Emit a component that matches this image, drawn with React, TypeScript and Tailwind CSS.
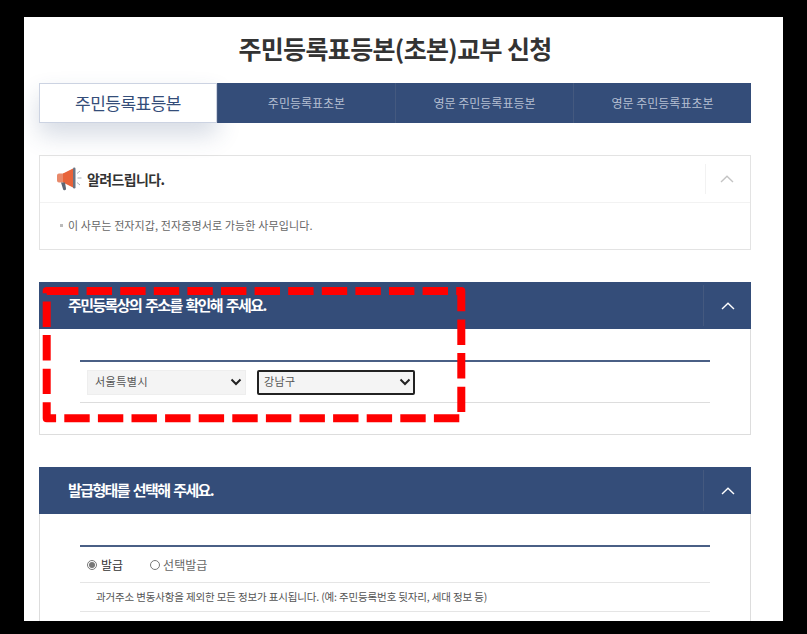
const tabs = ["주민등록표초본", "영문 주민등록표등본", "영문 주민등록표초본"];

function Chevron({ className }: { className: string }) {
  return (
    <svg width="14" height="8" viewBox="0 0 14 8" fill="none" className={className}>
      <path d="M1 7L7 1.2L13 7" stroke="currentColor" strokeWidth="1.4" />
    </svg>
  );
}

function SelectChevron() {
  return (
    <svg width="12" height="8" viewBox="0 0 12 8" fill="none">
      <path d="M1.5 1.5L6 6L10.5 1.5" stroke="#222" strokeWidth="2" />
    </svg>
  );
}

function Megaphone() {
  return (
    <svg width="26" height="24" viewBox="0 0 26 24" fill="none">
      <path d="M3 6.500h5v9H3a2 2 0 0 1-2-2v-5a2 2 0 0 1 2-2z" fill="#e8896a" />
      <path d="M7 6.500l10-5v19l-10-5z" fill="#e8633a" />
      <rect x="17" y="0.500" width="2.500" height="21" rx="1.200" fill="#6b7483" />
      <path d="M5 15.500h4l1 6a1.500 1.500 0 0 1-3 0.500z" fill="#5d6675" />
      <path d="M21.500 11h4M21 6.500l3-2.500M21 15.500l3 2.500" stroke="#aab0b8" strokeWidth="1" />
    </svg>
  );
}

function SectionHeader({ title }: { title: string }) {
  return (
    <div className="-mx-px flex h-[47px] items-center justify-between bg-[#344d79] pl-[29px]">
      <h3 className="text-[15px] font-bold tracking-[-1.6px] text-white [word-spacing:2px]">{title}</h3>
      <div className="flex h-[41px] w-[48px] items-center justify-center border-l border-[#44597f]">
        <Chevron className="text-white" />
      </div>
    </div>
  );
}

function Select({ label, focused }: { label: string; focused?: boolean }) {
  return (
    <div
      className={
        focused
          ? "flex h-[25px] w-[158px] items-center justify-between rounded-[2px] border-2 border-[#222] bg-[#f4f4f4] pl-[5px] pr-[2px] pb-[1px] text-[11px] tracking-[0.4px] text-[#555]"
          : "flex h-[25px] w-[159px] items-center justify-between border border-[#eeeeee] bg-[#f4f4f4] pl-[7px] pr-[3px] pb-[1px] text-[11px] tracking-[0.5px] text-[#555]"
      }
    >
      <span>{label}</span>
      <SelectChevron />
    </div>
  );
}

export default function App() {
  return (
    <div className="relative h-[634px] w-[807px] overflow-hidden bg-black pl-[24px] pt-[17px] font-['Noto_Sans_CJK_KR','Noto_Sans',sans-serif]">
      <div className="h-[605px] w-[759px] overflow-hidden bg-white pl-[15px] pr-[32px]">
        <h1 className="h-[66px] pt-[11px] text-center text-[25px] leading-[40px] font-bold tracking-[-0.65px] text-[#333]">
          주민등록표등본(초본)교부 신청
        </h1>

        <div className="flex h-[40px] w-[712px]">
          <div className="flex h-[40px] w-[178px] items-center justify-center border border-[#ccd3e2] bg-white text-[17px] tracking-[-0.5px] text-[#344d79] shadow-[0_12px_24px_rgba(52,77,121,0.2)]">
            주민등록표등본
          </div>
          {tabs.map((tab) => (
            <div
              key={tab}
              className="flex h-[40px] w-[178px] items-center justify-center border-l border-[#44597f] bg-[#344d79] text-[12px] text-[#b4bfd2]"
            >
              {tab}
            </div>
          ))}
        </div>

        <section className="mt-[32px] h-[95px] border border-[#e3e3e3]">
          <div className="flex h-[47px] items-center justify-between border-b border-[#f2f2f2] pl-[16px]">
            <div className="flex items-center gap-[5px]">
              <Megaphone />
              <h3 className="text-[14px] font-bold tracking-[-0.65px] text-[#333]">알려드립니다.</h3>
            </div>
            <div className="flex h-[30px] w-[45px] items-center justify-center border-l border-[#f2f2f2] pr-[3px]">
              <Chevron className="text-[#c4c4c4]" />
            </div>
          </div>
          <p className="flex h-[46px] items-center gap-[5px] pl-[20px] pb-[1px] text-[11px] tracking-[0.12px] text-[#666]">
            <span className="h-[3px] w-[3px] bg-[#bbb]" />이 사무는 전자지갑, 전자증명서로 가능한 사무입니다.
          </p>
        </section>

        <section className="mt-[32px] h-[153px] border-x border-b border-[#dddddd]">
          <SectionHeader title="주민등록상의 주소를 확인해 주세요." />
          <div className="mx-[40px] mt-[31px] flex h-[43px] items-center gap-[11px] border-t-2 border-b border-t-[#4a5f85] border-b-[#dddddd] pl-[7px]">
            <Select label="서울특별시" />
            <Select label="강남구" focused />
          </div>
        </section>

        <section className="mt-[32px] h-[200px] border-x border-[#dddddd]">
          <SectionHeader title="발급형태를 선택해 주세요." />
          <div className="mx-[40px] mt-[31px] border-t-2 border-[#4a5f85]">
            <div className="flex h-[36px] items-center border-b border-[#e5e5e5] pl-[7px] text-[12px]">
              <span className="flex h-[10px] w-[10px] items-center justify-center rounded-full border border-[#777]">
                <span className="h-[6px] w-[6px] rounded-full bg-[#777]" />
              </span>
              <span className="ml-[4px] text-[#333]">발급</span>
              <span className="ml-[27px] h-[10px] w-[10px] rounded-full border border-[#777]" />
              <span className="ml-[3px] text-[#666]">선택발급</span>
            </div>
            <p className="flex h-[29px] items-center border-b border-[#e5e5e5] pl-[16px] pb-[1px] text-[10.5px] tracking-[-0.15px] text-[#555]">
              과거주소 변동사항을 제외한 모든 정보가 표시됩니다. (예: 주민등록번호 뒷자리, 세대 정보 등)
            </p>
          </div>
        </section>
      </div>

      <div className="absolute bottom-0 left-0 h-[13px] w-full bg-black" />

      <svg width="430" height="142" viewBox="0 0 430 142" fill="none" className="absolute left-[39px] top-[283px]">
        <path d="M14 8H422.300V135.300H7.700V8H14" stroke="#ff0000" strokeWidth="8" strokeDasharray="25.400 8.200" strokeLinejoin="round" />
      </svg>
    </div>
  );
}
